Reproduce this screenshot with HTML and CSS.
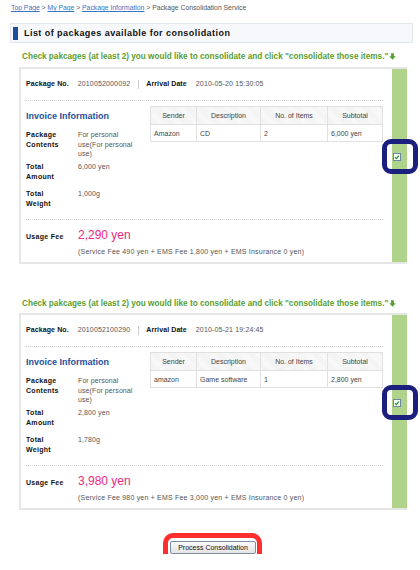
FILE: index.html
```html
<!DOCTYPE html>
<html>
<head>
<meta charset="utf-8">
<title>Package Consolidation Service</title>
<link rel="stylesheet" href="styles.css">
</head>
<body>
<div class="page">
  <div class="crumbs"><a href="#">Top Page</a> &gt; <a href="#">My Page</a> &gt; <a href="#">Package Information</a> &gt; Package Consolidation Service</div>
  <h1 class="title"><span class="title-bar"></span>List of packages available for consolidation</h1>

  <section class="group">
    <p class="hint">Check pakcages (at least 2) you would like to consolidate and click "consolidate those items."<svg class="hint-arrow" viewBox="0 0 8 8" width="7" height="7"><path d="M2.4 0.3h3.2v3.3h2.1L4 7.7 0.3 3.6h2.1z" fill="#5a9e32"/></svg></p>
    <div class="card">
      <div class="card-body">
        <div class="pkg-head">
          <span class="lbl">Package No.</span><span class="val">2010052000092</span>
          <span class="sep"></span>
          <span class="lbl">Arrival Date</span><span class="val">2010-05-20 15:30:05</span>
        </div>
        <div class="info">
          <div class="info-left">
            <h2 class="info-title">Invoice Information</h2>
            <dl class="facts">
              <dt>Package Contents</dt><dd class="tall">For personal use(For personal use)</dd>
              <dt>Total Amount</dt><dd>6,000 yen</dd>
              <dt>Total Weight</dt><dd>1,000g</dd>
            </dl>
          </div>
          <table class="items">
            <colgroup><col class="c1"><col class="c2"><col class="c3"><col class="c4"></colgroup>
            <thead><tr><th>Sender</th><th>Description</th><th>No. of Items</th><th>Subtotal</th></tr></thead>
            <tbody><tr><td>Amazon</td><td>CD</td><td>2</td><td>6,000 yen</td></tr></tbody>
          </table>
        </div>
        <div class="fee">
          <span class="fee-lbl">Usage Fee</span>
          <span class="fee-val">2,290 yen</span>
          <span class="fee-note">(Service Fee 490 yen + EMS Fee 1,800 yen + EMS Insurance 0 yen)</span>
        </div>
      </div>
      <div class="select">
        <span class="check-wrap">
          <svg class="check" viewBox="0 0 8 8" width="8" height="8"><rect x="0.5" y="0.5" width="7" height="7" fill="#fff" stroke="#6f86a6"/><path d="M2 4.2l1.4 1.4L6 2.6" fill="none" stroke="#1f9a2a" stroke-width="1.3"/></svg>
          <span class="ring"></span>
        </span>
      </div>
    </div>
  </section>

  <section class="group group-next">
    <p class="hint">Check pakcages (at least 2) you would like to consolidate and click "consolidate those items."<svg class="hint-arrow" viewBox="0 0 8 8" width="7" height="7"><path d="M2.4 0.3h3.2v3.3h2.1L4 7.7 0.3 3.6h2.1z" fill="#5a9e32"/></svg></p>
    <div class="card">
      <div class="card-body">
        <div class="pkg-head">
          <span class="lbl">Package No.</span><span class="val">2010052100290</span>
          <span class="sep"></span>
          <span class="lbl">Arrival Date</span><span class="val">2010-05-21 19:24:45</span>
        </div>
        <div class="info">
          <div class="info-left">
            <h2 class="info-title">Invoice Information</h2>
            <dl class="facts">
              <dt>Package Contents</dt><dd class="tall">For personal use(For personal use)</dd>
              <dt>Total Amount</dt><dd>2,800 yen</dd>
              <dt>Total Weight</dt><dd>1,780g</dd>
            </dl>
          </div>
          <table class="items">
            <colgroup><col class="c1"><col class="c2"><col class="c3"><col class="c4"></colgroup>
            <thead><tr><th>Sender</th><th>Description</th><th>No. of Items</th><th>Subtotal</th></tr></thead>
            <tbody><tr><td>amazon</td><td>Game software</td><td>1</td><td>2,800 yen</td></tr></tbody>
          </table>
        </div>
        <div class="fee">
          <span class="fee-lbl">Usage Fee</span>
          <span class="fee-val">3,980 yen</span>
          <span class="fee-note">(Service Fee 980 yen + EMS Fee 3,000 yen + EMS Insurance 0 yen)</span>
        </div>
      </div>
      <div class="select">
        <span class="check-wrap">
          <svg class="check" viewBox="0 0 8 8" width="8" height="8"><rect x="0.5" y="0.5" width="7" height="7" fill="#fff" stroke="#6f86a6"/><path d="M2 4.2l1.4 1.4L6 2.6" fill="none" stroke="#1f9a2a" stroke-width="1.3"/></svg>
          <span class="ring"></span>
        </span>
      </div>
    </div>
  </section>

  <div class="actions">
    <span class="btn-wrap"><button class="btn" type="button">Process Consolidation</button><span class="btn-ring"></span></span>
  </div>
</div>
</body>
</html>
```
FILE: styles.css
```css
* { box-sizing: border-box; }
html, body { margin: 0; padding: 0; background: #fff; }
body {
  font-family: "Liberation Sans", Arial, sans-serif;
  font-size: 7px;
  color: #444;
}
.page { width: 420px; padding: 3px 7px 0 10px; }

.crumbs {
  font-size: 6.8px;
  line-height: 9px;
  color: #555;
  padding-left: 1px;
}
.crumbs a { color: #3a74c0; text-decoration: underline; }

.title {
  margin: 11px 0 0;
  height: 20px;
  display: flex;
  align-items: center;
  gap: 6px;
  padding-left: 2px;
  border: 1px solid #e2e7ee;
  background: #f6f8fb;
  font-size: 9px;
  font-weight: bold;
  letter-spacing: 0.45px;
  color: #111;
}
.title-bar { width: 5px; height: 13px; background: #1d4e98; }

.group { margin: 0 6px 0 9px; }
.group-next { margin-top: 34px; }
.group-next .hint { margin-bottom: 3px; }

.hint {
  margin: 8px 0 4px 3px;
  line-height: 12px;
  font-size: 8.2px;
  font-weight: bold;
  color: #5a9e32;
  white-space: nowrap;
}
.hint-arrow { margin-left: 1px; vertical-align: -1px; }

.card {
  display: flex;
  border: 2px solid #e6e6e6;
  border-right: 0;
}
.card-body { flex: 1; padding: 10px 9px 5px 5px; }
.select { width: 15px; background: #afd38b; padding: 84px 0 0 1px; }
.check-wrap { position: relative; display: block; width: 8px; height: 8px; }
.check { display: block; }
.ring {
  position: absolute;
  left: -11px; top: -14px; right: -17px; bottom: -13px;
  border: 5px solid #1b1f7d;
  border-radius: 9px;
}

.pkg-head {
  display: flex;
  align-items: center;
  line-height: 10px;
  padding-bottom: 11px;
  border-bottom: 1px dotted #cfcfcf;
  margin-left: -1px;
  padding-left: 1px;
}
.lbl { font-weight: bold; color: #111; letter-spacing: 0.1px; }
.val { margin-left: 9px; color: #555; letter-spacing: 0.15px; }
.sep { width: 1px; height: 9px; background: #ccc; margin: 0 7px 0 8px; }

.info {
  display: flex;
  justify-content: space-between;
  padding: 5px 0 11px;
  border-bottom: 1px dotted #cfcfcf;
}
.info-left { width: 120px; padding-top: 4px; }
.info-title {
  margin: 0;
  font-size: 9px;
  line-height: 12px;
  font-weight: bold;
  color: #1e4f9c;
}
.facts {
  margin: 8px 0 0;
  display: grid;
  grid-template-columns: 52px 64px;
  row-gap: 8px;
  line-height: 9.5px;
}
.facts dt { font-weight: bold; color: #111; letter-spacing: 0.3px; padding-right: 8px; }
.facts dd { margin: 0; color: #555; letter-spacing: 0.1px; }
.facts dd.tall { margin-bottom: -4.5px; }

.items {
  width: 232px;
  border-collapse: collapse;
  table-layout: fixed;
  color: #444;
  align-self: flex-start;
}
.items .c1 { width: 46px; }
.items .c2 { width: 64px; }
.items .c3 { width: 67px; }
.items .c4 { width: 55px; }
.items th, .items td { border: 1px solid #e0e0e0; }
.items th {
  height: 18px;
  font-weight: normal;
  text-align: center;
  background: repeating-linear-gradient(45deg, #f1f1f1 0 1px, #fafafa 1px 2px);
}
.items td { height: 17px; padding: 0 3px; }

.fee {
  display: grid;
  grid-template-columns: 52px 1fr;
  align-items: baseline;
  padding-top: 8px;
}
.fee-lbl { font-weight: bold; color: #111; letter-spacing: 0.3px; }
.fee-val { font-size: 12px; line-height: 14px; color: #ef2a7e; }
.fee-note { grid-column: 2; line-height: 10px; margin-top: 5px; color: #555; letter-spacing: 0.2px; }

.actions { display: flex; justify-content: center; margin: 31px 6px 0 9px; }
.btn-wrap { position: relative; display: inline-block; }
.btn {
  display: block;
  width: 86px;
  height: 13px;
  padding: 0;
  font-family: "Liberation Sans", Arial, sans-serif;
  font-size: 7px;
  color: #111;
  background: linear-gradient(#fbfbfb, #e4e4e4);
  border: 1px solid #7d8ca3;
  border-radius: 2px;
}
.btn-ring {
  position: absolute;
  left: -7px; top: -8px; right: -6px; bottom: -9px;
  border: 5px solid #ff2f2f;
  border-radius: 10px;
}
```
